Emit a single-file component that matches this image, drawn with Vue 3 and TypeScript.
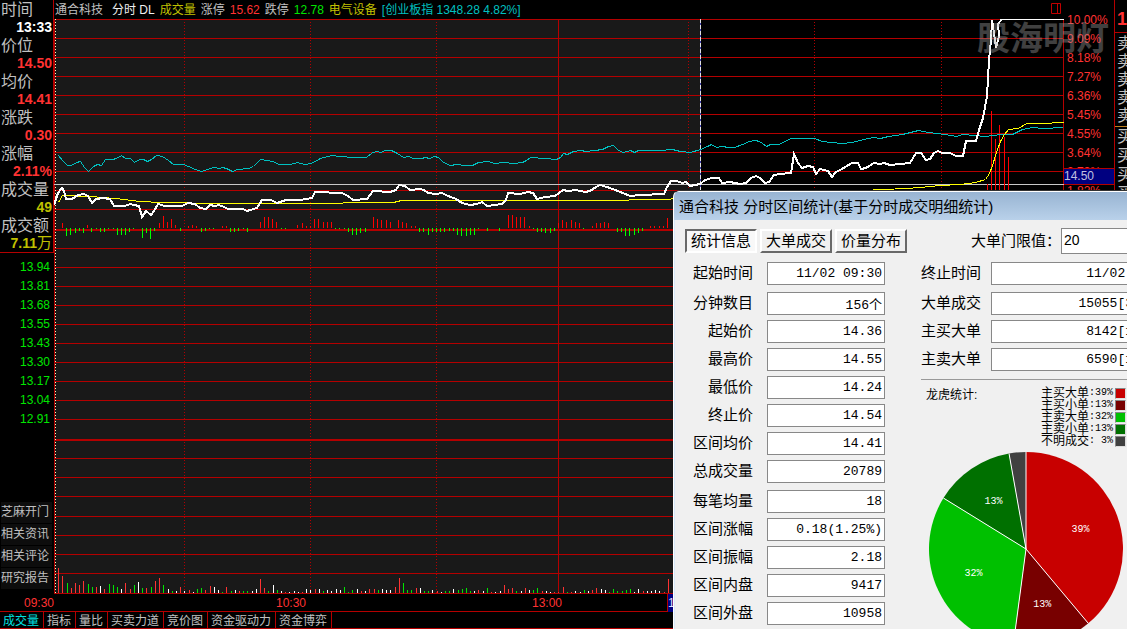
<script setup lang="ts">
type Tone = 'r' | 'g' | 'w'

const quotes: { label: string; value: string; tone: string }[] = [
  { label: '时间', value: '13:33', tone: 'white' },
  { label: '价位', value: '14.50', tone: 'red' },
  { label: '均价', value: '14.41', tone: 'red' },
  { label: '涨跌', value: '0.30', tone: 'red' },
  { label: '涨幅', value: '2.11%', tone: 'red' },
  { label: '成交量', value: '49', tone: 'olive' },
  { label: '成交额', value: '7.11万', tone: 'olive' },
]
const prices = ['13.94', '13.81', '13.68', '13.55', '13.43', '13.30', '13.17', '13.04', '12.91']
const links = ['芝麻开门', '相关资讯', '相关评论', '研究报告']
const percents = ['10.00%', '9.09%', '8.18%', '7.27%', '6.36%', '5.45%', '4.55%', '3.64%', '2.73%', '1.82%']
const indicatorTabs = ['成交量', '指标', '量比', '买卖力道', '竞价图', '资金驱动力', '资金博弈']
const times = [
  { at: 24, text: '09:30' },
  { at: 276, text: '10:30' },
  { at: 532, text: '13:00' },
]

const gridRows = [19, 38, 57, 76, 95, 114, 133, 152, 171, 190, 209, 248, 267, 286, 305, 324, 343, 362, 381, 400, 419, 458, 477, 496, 516, 535, 554, 573, 593]
const thickRows = [229, 439]
const gridCols = [184, 310, 436, 688, 814, 941]

const indexLine =
  '58,155 62,160 67,165 71,165 76,162 80,161 84,167 88,171 93,166 97,164 101,165 105,159 112,159 116,158 121,155 125,158 130,158 134,162 139,159 143,159 147,161 151,159 156,155 162,156 168,160 173,164 183,164 188,166 195,169 201,171 207,169 213,167 219,168 222,167 226,168 232,171 237,169 248,168 253,166 260,159 266,160 272,161 279,164 290,164 297,162 304,164 311,163 320,158 331,155 340,156 352,157 366,157 372,152 377,151 380,152 385,150 391,150 397,153 403,157 408,156 413,158 421,158 425,157 429,158 434,156 438,157 443,162 450,165 456,164 464,165 472,165 478,162 488,161 494,163 503,162 513,163 522,162 526,160 530,157 545,158 556,159 560,157 563,153 567,154 573,151 580,150 586,151 602,149 608,146 613,145 618,150 623,152 630,150 634,152 638,150 660,150 672,149 680,151 690,152 700,149 707,146 711,144 716,147 722,146 728,147 734,147 742,144 749,141 755,140 759,141 762,143 766,146 770,144 778,144 785,141 790,138 814,138 822,141 830,142 842,143 852,142 863,139 873,137 880,138 888,136 902,134 918,130 928,132 944,134 956,136 962,134 974,135 985,136 1000,134 1012,134 1022,129 1032,127 1042,128 1063,127'
const priceLine =
  '54,205 58,193 62,188 64,191 66,199 72,199 78,195 84,194 88,196 92,203 96,199 103,198 110,199 114,206 125,206 130,204 134,205 139,206 142,217 146,211 151,215 154,211 158,204 165,206 182,206 188,203 195,204 200,208 206,209 210,205 215,206 219,205 224,207 228,209 243,209 247,211 257,208 262,200 271,200 277,203 286,200 300,200 312,198 315,192 342,193 348,196 353,200 367,199 373,191 390,192 396,190 399,185 405,186 410,190 420,189 424,190 428,193 436,194 442,193 448,196 456,199 462,203 470,205 477,204 482,202 487,206 502,204 506,200 508,193 520,194 528,192 533,193 537,199 545,197 555,196 563,190 568,191 576,190 585,192 590,191 596,187 600,185 607,187 618,191 630,196 640,195 664,194 667,187 671,181 677,181 682,183 686,182 690,186 700,184 705,180 712,178 719,178 722,183 730,182 740,184 746,183 751,178 756,176 760,178 765,183 769,182 774,175 780,174 791,173 794,154 798,163 802,168 808,166 813,167 816,174 820,169 828,171 832,177 836,172 840,170 852,163 858,163 861,169 866,168 874,163 880,164 884,163 890,165 910,163 916,153 921,153 926,160 930,159 934,153 938,151 942,153 950,153 956,156 963,156 966,141 976,141 979,130 983,118 987,96 989,60 991,40 992,20 994,33 996,48 999,36 998,24 1002,19 1064,19'
const averageLine =
  '58,202 62,195 90,196 115,198 140,201 160,202 213,203 325,203 360,202 393,202 401,200 590,200 668,199 674,198 760,194 862,190 905,188 920,187 940,185 960,184 975,182 985,179 989,173 992,165 996,152 1000,141 1004,134 1008,129 1018,128 1026,123 1040,123 1064,122'

const flow: [number, number][] = [
  [62, 5], [66, -8], [70, -7], [75, -5], [79, -3], [83, -5], [87, 3], [91, -4], [96, -1], [100, -4], [104, -4], [108, -1], [113, -1],
  [117, -7], [121, -7], [125, -7], [129, -4], [133, -1], [142, -10], [146, -5], [150, -11], [154, -3], [159, 5], [163, 12], [167, 6],
  [171, 9], [175, 3], [180, -3], [188, 2], [192, 3], [196, 2], [201, -4], [205, -3], [209, -1], [213, -1], [222, 2], [226, 2],
  [230, -4], [234, -4], [238, -3], [243, -1], [247, -4], [260, 6], [264, 11], [268, 11], [272, 9], [276, 6], [281, -1], [285, -1],
  [297, 3], [302, 5], [306, 2], [310, 2], [314, 9], [318, 9], [323, 6], [327, 6], [331, 6], [335, -1], [339, -1], [344, -1],
  [348, -4], [352, -7], [356, -7], [360, -5], [365, -4], [373, 11], [377, 9], [381, 8], [386, 8], [390, 6], [398, 8], [402, 6],
  [406, 5], [411, 2], [415, 2], [419, -4], [423, -4], [428, -7], [432, -4], [436, -4], [440, -4], [444, -4], [449, -3], [453, -3],
  [457, -7], [461, -8], [466, -8], [470, -7], [474, -7], [478, -1], [487, -3], [499, -3], [508, 13], [512, 13], [516, 11],
  [520, 11], [524, 11], [529, 2], [533, -1], [537, -4], [541, -4], [545, -5], [550, -5], [554, -3], [558, 5], [562, 8], [566, 6],
  [571, 8], [575, 6], [579, 5], [583, -1], [592, 2], [596, 5], [600, 5], [604, 6], [608, 5], [617, -4], [621, -4], [625, -8],
  [629, -8], [634, -7], [638, -5], [642, -3], [650, 2], [654, 2], [659, 2], [663, 2], [667, 10], [987, 44], [991, 117],
  [995, 89], [999, 103], [1004, 91], [1008, 71],
]

const volumeSource =
  '58:25r 62:17r 67:10g 71:5r 75:10r 79:8r 83:12r 88:9g 92:6g 96:6r 100:7w 104:4r 109:9g 113:8g 117:6g 121:4w 125:10r 130:4r 134:8g 138:11w 142:5g 146:5r 151:6g 155:12r 159:15r 163:8g 168:4w 172:2g 176:2w 180:6r 184:2w 189:3r 193:1w 197:4g 201:5g 205:3r 210:7r 214:6w 218:3w 222:1g 226:6r 231:2g 235:3w 239:2r 243:2g 247:2g 252:2w 256:4w 260:14r 264:5r 268:2g 273:8w 277:3g 281:2w 285:1r 289:1w 294:2w 298:1w 302:1r 306:4w 310:3w 315:4r 319:4w 323:2g 327:3w 331:2w 336:4w 340:3w 344:6g 348:1g 352:3g 357:4w 361:2r 365:2w 369:4r 374:4r 378:3g 382:4w 386:3w 390:3w 395:6r 399:15r 403:10g 407:3g 411:3g 416:5r 420:5w 424:2g 428:2g 432:3w 437:2r 441:1w 445:2g 449:2g 453:4w 458:3g 462:4g 466:5g 470:2g 474:2w 478:3r 483:2w 487:5g 491:1r 495:1w 500:2w 504:8r 508:4r 512:5r 516:2g 521:2w 525:5r 529:3w 533:3g 537:5g 542:2r 546:2w 550:1w 554:1r 558:1r 563:6r 567:1g 571:1r 575:2w 580:1w 584:3g 588:2w 592:3r 596:5r 601:4w 605:3w 609:1g 613:4g 617:2g 622:2g 626:3g 630:4g 634:1w 638:4w 643:2r 647:2w 651:2w 655:3w 659:2w 664:1r 668:14r'
const volumes = volumeSource.split(' ').map((item) => {
  const [x, rest] = item.split(':')
  return { x: Number(x), h: parseInt(rest, 10), tone: rest.slice(-1) as Tone }
})

const dialogTabs = ['统计信息', '大单成交', '价量分布']
const leftGroups: [string, string][][] = [
  [['起始时间', '11/02 09:30']],
  [
    ['分钟数目', '156个'],
    ['起始价', '14.36'],
    ['最高价', '14.55'],
    ['最低价', '14.24'],
    ['终止价', '14.54'],
    ['区间均价', '14.41'],
    ['总成交量', '20789'],
  ],
  [
    ['每笔均量', '18'],
    ['区间涨幅', '0.18(1.25%)'],
    ['区间振幅', '2.18'],
    ['区间内盘', '9417'],
    ['区间外盘', '10958'],
  ],
]
const rightGroups: [string, string][][] = [
  [['终止时间', '11/02 13:33']],
  [
    ['大单成交', '15055[36.2%]'],
    ['主买大单', '8142[19.6%]'],
    ['主卖大单', '6590[15.9%]'],
  ],
]

const shares = [
  { name: '主买大单', text: '39%', share: 0.389, color: '#c80000' },
  { name: '主买小单', text: '13%', share: 0.132, color: '#780000' },
  { name: '主卖大单', text: '32%', share: 0.317, color: '#00c000' },
  { name: '主卖小单', text: '13%', share: 0.134, color: '#007000' },
  { name: '不明成交', text: ' 3%', share: 0.028, color: '#404040' },
]
let turned = 0
const slices = shares.map((s) => {
  const from = turned * 2 * Math.PI
  turned += s.share
  const to = turned * 2 * Math.PI
  const mid = (from + to) / 2
  const px = (a: number, r: number) => (98 + r * Math.sin(a)).toFixed(2)
  const py = (a: number, r: number) => (98 - r * Math.cos(a)).toFixed(2)
  return {
    d: `M98 98L${px(from, 97)} ${py(from, 97)}A97 97 0 0 1 ${px(to, 97)} ${py(to, 97)}Z`,
    x: px(from, 97),
    y: py(from, 97),
    lx: px(mid, 58),
    ly: py(mid, 58),
    color: s.color,
    text: s.share > 0.05 ? s.text : '',
  }
})
</script>

<template>
  <div class="app">
    <div class="board">
      <aside class="left">
        <dl class="quotes">
          <template v-for="q in quotes" :key="q.label">
            <dt>{{ q.label }}</dt>
            <dd v-if="q.value.endsWith('万')" :class="q.tone">7.11<span class="unit">万</span></dd>
            <dd v-else :class="q.tone">{{ q.value }}</dd>
          </template>
        </dl>
        <ul class="prices">
          <li v-for="p in prices" :key="p">{{ p }}</li>
        </ul>
        <nav class="links">
          <button v-for="l in links" :key="l" type="button">{{ l }}</button>
        </nav>
      </aside>

      <section class="centre">
        <header class="info">
          <span class="silver name">通合科技</span>
          <span class="bright">分时 DL</span>
          <span class="olive">成交量</span>
          <span class="silver">涨停</span>
          <span class="red">15.62</span>
          <span class="silver">跌停</span>
          <span class="lime">12.78</span>
          <span class="olive">电气设备</span>
          <span class="teal">[创业板指 1348.28 4.82%]</span>
          <svg class="pane-icon" width="10" height="11" viewBox="0 0 10 11" aria-hidden="true">
            <path d="M.5.5h9v10h-9zM6.5.5v10" fill="none" stroke="#c00000" />
          </svg>
        </header>
        <svg class="chart" viewBox="54 19 1010 575" preserveAspectRatio="none" aria-label="分时走势">
          <rect x="55" y="19" width="645" height="575" fill="#191919" />
          <g fill="#b40000">
            <rect v-for="y in gridRows" :key="y" x="54" :y="y" width="1010" height="1" />
            <rect v-for="y in thickRows" :key="y" x="54" :y="y" width="1010" height="2" />
            <rect x="54" y="19" width="1" height="575" />
            <rect x="558" y="19" width="1" height="575" />
            <rect x="1063" y="19" width="1" height="575" />
          </g>
          <path
            v-for="x in gridCols"
            :key="x"
            :d="`M${x + 0.5} 22V593`"
            stroke="#b40000"
            stroke-dasharray="1 2"
          />
          <path d="M55.5 19V593" stroke="#ffffc0" stroke-dasharray="1 2" />
          <rect x="54" y="184" width="1010" height="1" fill="#c8c8c8" />
          <rect x="952" y="184" width="12" height="1" fill="#3030b0" />
          <path d="M700.5 19V593" stroke="#4040b0" />
          <path d="M700.5 19V593" stroke="#e0e0e0" stroke-dasharray="4 2" />
          <g>
            <rect
              v-for="[x, h] in flow"
              :key="x"
              :x="x"
              :y="h > 0 ? 228 - h : 228"
              width="1"
              :height="Math.abs(h)"
              :fill="h > 0 ? '#ff0000' : '#00ff00'"
            />
          </g>
          <rect
            v-for="v in volumes"
            :key="v.x"
            :x="v.x"
            :y="593 - v.h"
            width="1"
            :height="v.h"
            :class="['vol', v.tone]"
          />
          <polyline :points="indexLine" fill="none" stroke="#00c0c0" transform="translate(0.5 0.5)" />
          <polyline :points="averageLine" fill="none" stroke="#ffff00" transform="translate(0.5 0.5)" />
          <polyline :points="priceLine" fill="none" stroke="#ffffff" stroke-width="2" />
        </svg>
      </section>

      <div class="scale">
        <span v-for="p in percents" :key="p">{{ p }}</span>
        <b class="cursor">14.50</b>
      </div>

      <aside class="right">
        <b class="rank">1</b>
        <ul class="asks">
          <li v-for="n in 5" :key="n">卖</li>
        </ul>
        <ul class="bids">
          <li v-for="n in 5" :key="n">买</li>
        </ul>
      </aside>
      <div class="watermark">股海明灯</div>
    </div>

    <div class="times">
      <span v-for="t in times" :key="t.at" :style="{ left: t.at + 'px' }">{{ t.text }}</span>
      <span class="now">13:33</span>
    </div>
    <nav class="bottom">
      <button v-for="(t, i) in indicatorTabs" :key="t" type="button" :class="{ active: i === 0 }">{{ t }}</button>
    </nav>

    <section class="dialog" role="dialog" aria-labelledby="dialog-title">
      <h1 id="dialog-title">通合科技 分时区间统计(基于分时成交明细统计)</h1>
      <div class="toolbar">
        <button v-for="(t, i) in dialogTabs" :key="t" type="button" :class="{ pressed: i === 0 }">{{ t }}</button>
        <label for="limit">大单门限值：</label>
        <input id="limit" type="text" value="20" />
      </div>
      <div class="columns">
        <div class="fields">
          <div v-for="(group, g) in leftGroups" :key="g" class="group">
            <div v-for="[label, value] in group" :key="label" class="field">
              <label :for="'l-' + label">{{ label }}</label>
              <input :id="'l-' + label" type="text" readonly :value="value" />
            </div>
          </div>
        </div>
        <div class="side">
          <div class="fields wide">
            <div v-for="(group, g) in rightGroups" :key="g" class="group">
              <div v-for="[label, value] in group" :key="label" class="field">
                <label :for="'r-' + label">{{ label }}</label>
                <input :id="'r-' + label" type="text" readonly :value="value" />
              </div>
            </div>
          </div>
          <div class="summary">
            <h2>龙虎统计:</h2>
            <ul class="legend">
              <li v-for="s in shares" :key="s.name">
                <span>{{ s.name }}</span><span class="num">:{{ s.text }}</span>
                <i :style="{ background: s.color }"></i>
              </li>
            </ul>
          </div>
          <svg class="pie" width="196" height="196" viewBox="0 0 196 196" role="img" aria-label="龙虎统计">
            <path v-for="(s, i) in slices" :key="i" :d="s.d" :fill="s.color" />
            <path v-for="(s, i) in slices" :key="'e' + i" :d="`M98 98L${s.x} ${s.y}`" stroke="#fff" />
            <text v-for="(s, i) in slices" :key="'t' + i" :x="s.lx" :y="s.ly">{{ s.text }}</text>
          </svg>
        </div>
      </div>
    </section>
  </div>
</template>

<style>
body {
  margin: 0;
  background: #000;
}
</style>

<style scoped>
.app {
  position: relative;
  display: grid;
  grid-template-rows: 1fr 17px 18px;
  height: 100vh;
  overflow: hidden;
  background: #000;
  font: 12px/18px 'Liberation Sans', 'Noto Sans CJK SC', sans-serif;
  color: #c0c0c0;
}
ul,
dl,
dd,
h1,
h2 {
  margin: 0;
  padding: 0;
  list-style: none;
  font-weight: normal;
}
button {
  margin: 0;
  padding: 0;
  border: 0;
  font: inherit;
  white-space: nowrap;
}
.board {
  position: relative;
  display: grid;
  grid-template-columns: 54px 1fr 51px 12px;
  min-height: 0;
  overflow: hidden;
}
.left {
  display: flex;
  flex-direction: column;
}
.quotes {
  height: 252px;
  border-right: 1px solid #b40000;
  border-bottom: 1px solid #b40000;
}
.quotes dt {
  height: 18px;
  padding-left: 1px;
  font-size: 16px;
  line-height: 20px;
}
.quotes dd {
  height: 18px;
  padding-right: 1px;
  text-align: right;
  font-size: 14px;
  font-weight: bold;
}
.unit {
  font-size: 15px;
  font-weight: normal;
}
.white {
  color: #fff;
}
.bright {
  color: #f0f0f0;
}
.red {
  color: #ff3232;
}
.olive {
  color: #c0c000;
}
.lime {
  color: #00e600;
}
.teal {
  color: #00c0c0;
}
.prices {
  padding: 5px 4px 0 0;
  text-align: right;
  line-height: 19px;
  color: #00e600;
}
.links {
  display: flex;
  flex-direction: column;
  gap: 1px;
  margin: auto 2px 5px 1px;
}
.links button {
  height: 21px;
  padding: 0 0 2px;
  text-align: left;
  line-height: 18px;
  color: #c0c0c0;
  background: #0d0d0d;
}
.centre {
  display: grid;
  grid-template-rows: 19px 1fr;
  min-width: 0;
  min-height: 0;
}
.info {
  display: flex;
  gap: 5px;
  padding: 0 3px 0 1px;
  line-height: 20px;
  white-space: nowrap;
}
.name {
  margin-right: 4px;
}
.pane-icon {
  margin: 3px 0 0 auto;
}
.chart {
  width: 100%;
  height: 100%;
  min-height: 0;
  shape-rendering: crispEdges;
}
.vol.r {
  fill: #ff3232;
}
.vol.g {
  fill: #00e600;
}
.vol.w {
  fill: #fff;
}
.scale {
  position: relative;
  display: flex;
  flex-direction: column;
  padding: 11px 0 0 3px;
  border-right: 1px solid #b40000;
  line-height: 19px;
  color: #ff3232;
}
.cursor {
  position: absolute;
  top: 168px;
  left: 0;
  right: 0;
  border: solid #b40000;
  border-width: 1px 0;
  line-height: 15px;
  font-weight: normal;
  color: #c0c0e0;
  background: #000080;
}
.right {
  overflow: hidden;
  font-size: 16px;
}
.rank {
  display: block;
  height: 33px;
  padding: 0 0 0 2px;
  border-bottom: 1px solid #b40000;
  line-height: 38px;
  box-sizing: border-box;
  font-size: 18px;
  color: #ff3232;
}
.right li {
  padding-left: 2px;
}
.asks {
  box-sizing: border-box;
  height: 94px;
  padding-top: 2px;
  border-bottom: 1px solid #c08020;
}
.bids {
  line-height: 19px;
}
.watermark {
  position: absolute;
  top: 16px;
  right: 18px;
  font: bold 33px/40px 'Noto Sans CJK SC', sans-serif;
  color: #a0a0a0;
  opacity: 0.4;
}
.times {
  position: relative;
  line-height: 18px;
  color: #ff3232;
}
.times span {
  position: absolute;
  top: 0;
}
.times .now {
  left: 667px;
  border-left: 1px solid #b40000;
  color: #e0e0ff;
  background: #000080;
}
.bottom {
  display: flex;
  border: solid #b40000;
  border-width: 1px 0;
}
.bottom button {
  height: 16px;
  padding: 0 4px 0 3px;
  border-right: 1px solid #b40000;
  line-height: 18px;
  color: #c0c0c0;
  background: none;
}
.bottom .active {
  color: #00e0e0;
}
.dialog {
  position: absolute;
  top: 190px;
  left: 673px;
  right: 0;
  bottom: 0;
  overflow: hidden;
  border-top: 1px solid #333;
  border-left: 1px solid #fff;
  border-top-left-radius: 7px;
  box-shadow: inset 1px 1px #d8e8f8;
  font-size: 15px;
  color: #000;
  background: #f0f0f0;
}
.dialog h1 {
  height: 29px;
  padding-left: 5px;
  border-top: 1px solid #fff;
  box-sizing: border-box;
  font-size: 15px;
  line-height: 30px;
  white-space: nowrap;
  background: linear-gradient(#98b4d2, #b9d1ea);
}
.toolbar {
  display: flex;
  align-items: center;
  gap: 3px;
  height: 26px;
  margin-top: 8px;
  padding-left: 11px;
}
.toolbar button {
  width: 72px;
  height: 24px;
  border: 2px solid;
  border-color: #fff #696969 #696969 #fff;
  line-height: 20px;
  color: #000;
  background: #f0f0f0;
}
.toolbar .pressed {
  border-color: #696969 #fff #fff #696969;
  background: #f8f8f8;
}
.toolbar label {
  flex: none;
  width: 90px;
  margin: 0 -3px 0 61px;
}
input {
  box-sizing: border-box;
  height: 23px;
  padding: 0 2px;
  border: 1px solid #888;
  border-radius: 0;
  background: #fff;
  color: #000;
  outline: 0;
}
#limit {
  flex: 1;
  min-width: 0;
  height: 26px;
  padding-bottom: 2px;
  border-right: 0;
  font: 14px 'Liberation Sans', sans-serif;
}
.columns {
  display: flex;
  gap: 36px;
  margin-top: 8px;
  padding-left: 19px;
}
.fields {
  display: flex;
  flex: none;
  flex-direction: column;
  gap: 7px;
}
.group {
  display: flex;
  flex-direction: column;
  gap: 5px;
}
.field {
  display: flex;
  gap: 14px;
}
.field label {
  flex: none;
  width: 60px;
  line-height: 22px;
  text-align: right;
}
.field input {
  flex: none;
  width: 118px;
  font: 13px 'Liberation Mono', 'Noto Sans CJK SC', monospace;
  text-align: right;
}
.side {
  flex: 1;
  min-width: 0;
}
.wide .field {
  gap: 10px;
}
.wide .field input {
  width: 184px;
}
.summary {
  display: flex;
  justify-content: space-between;
  margin-top: 8px;
  padding: 7px 1px 0 5px;
  border-top: 1px solid #999;
}
.dialog h2 {
  font-size: 12px;
  line-height: 16px;
}
.legend {
  font-size: 12px;
  line-height: 12px;
}
.legend li {
  display: flex;
  align-items: center;
  height: 12px;
}
.legend .num {
  font: 10px/12px 'Liberation Mono', monospace;
  white-space: pre;
}
.legend i {
  width: 9px;
  height: 9px;
  margin-left: 2px;
  border: 1px solid;
  border-color: #888 #ddd #ddd #888;
}
.pie {
  display: block;
  margin: 4px 0 0 7px;
}
.pie text {
  font: 10px 'Liberation Mono', monospace;
  text-anchor: middle;
  dominant-baseline: central;
  fill: #fff;
}
</style>
